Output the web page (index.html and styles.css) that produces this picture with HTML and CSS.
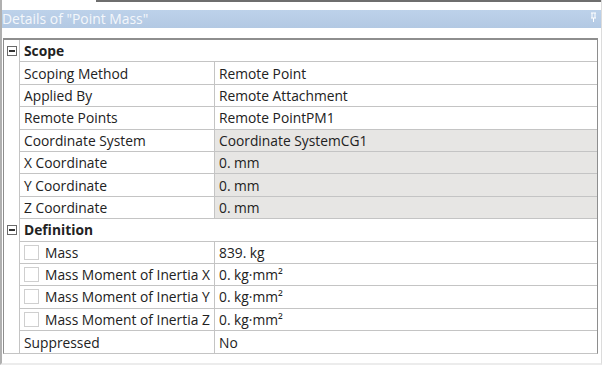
FILE: index.html
```html
<!DOCTYPE html>
<html lang="en">
  <head>
    <meta charset="UTF-8" />
    <title>Details of "Point Mass"</title>
    <link rel="stylesheet" href="styles.css">
  </head>
  <body>
    <main class="panel">
      <div class="top-edge"></div>
      <header class="titlebar">
        <span class="title">Details of "Point Mass"</span>
        <svg class="pin" width="7" height="11" viewBox="0 0 7 11">
          <path d="M1 1h5M2 1v5M5 1v5M1 6h5M3.5 6v4" stroke="#fff" stroke-width="1" fill="none" />
        </svg>
      </header>
      <section class="details">
        <div class="row group">
          <div class="tree"><span class="toggle"></span></div>
          <div class="cell group-name">Scope</div>
        </div>
        <div class="row">
          <div class="tree"></div>
          <div class="cell name">Scoping Method</div>
          <div class="cell value">Remote Point</div>
        </div>
        <div class="row">
          <div class="tree"></div>
          <div class="cell name">Applied By</div>
          <div class="cell value">Remote Attachment</div>
        </div>
        <div class="row">
          <div class="tree"></div>
          <div class="cell name">Remote Points</div>
          <div class="cell value">Remote PointPM1</div>
        </div>
        <div class="row">
          <div class="tree"></div>
          <div class="cell name">Coordinate System</div>
          <div class="cell value readonly">Coordinate SystemCG1</div>
        </div>
        <div class="row">
          <div class="tree"></div>
          <div class="cell name">X Coordinate</div>
          <div class="cell value readonly">0. mm</div>
        </div>
        <div class="row">
          <div class="tree"></div>
          <div class="cell name">Y Coordinate</div>
          <div class="cell value readonly">0. mm</div>
        </div>
        <div class="row">
          <div class="tree"></div>
          <div class="cell name">Z Coordinate</div>
          <div class="cell value readonly">0. mm</div>
        </div>
        <div class="row group">
          <div class="tree"><span class="toggle"></span></div>
          <div class="cell group-name">Definition</div>
        </div>
        <div class="row">
          <div class="tree"></div>
          <div class="cell name"><span class="check"></span>Mass</div>
          <div class="cell value">839. kg</div>
        </div>
        <div class="row">
          <div class="tree"></div>
          <div class="cell name"><span class="check"></span>Mass Moment of Inertia X</div>
          <div class="cell value">0. kg·mm²</div>
        </div>
        <div class="row">
          <div class="tree"></div>
          <div class="cell name"><span class="check"></span>Mass Moment of Inertia Y</div>
          <div class="cell value">0. kg·mm²</div>
        </div>
        <div class="row">
          <div class="tree"></div>
          <div class="cell name"><span class="check"></span>Mass Moment of Inertia Z</div>
          <div class="cell value">0. kg·mm²</div>
        </div>
        <div class="row">
          <div class="tree"></div>
          <div class="cell name">Suppressed</div>
          <div class="cell value">No</div>
        </div>
      </section>
    </main>
  </body>
</html>
```

FILE: styles.css
```css
* {
  box-sizing: border-box;
  margin: 0;
  padding: 0;
}
:root {
  --grid-line: #c4c4c4;
  --frame: #8e8e8e;
  --title-blue: #b8cee7;
  --readonly: #e7e6e4;
  --text: #222;
}
body {
  background: #fff;
  font-family: "Open Sans", "Noto Sans", sans-serif;
  font-size: 13.8px;
  color: var(--text);
  width: 602px;
  height: 365px;
  overflow: hidden;
}
.panel {
  height: 100%;
  border-left: 2px solid #b0b0b0;
  border-right: 1px solid #dcdcdc;
  border-bottom: 2px solid #ececec;
  display: flex;
  flex-direction: column;
}
.top-edge {
  height: 2px;
  margin-left: 94px;
  background: #6e6e6e;
}
.titlebar {
  margin-top: 8px;
  height: 18px;
  background: linear-gradient(#bdd2ea, #b3c9e3);
  display: flex;
  align-items: center;
  justify-content: space-between;
  padding: 0 4px 0 0;
}
.titlebar .title {
  color: #f4f7fb;
  font-size: 13.9px;
  line-height: 18px;
}
.titlebar .pin {
  margin-top: -4px;
}
/* property grid */
.details {
  margin: 10px 3px 0 1px;
  border-top: 2px solid var(--frame);
  border-left: 1px solid var(--frame);
  border-right: 1px solid var(--frame);
  border-bottom: 1px solid var(--grid-line);
  display: flex;
  flex-direction: column;
}
.details .row {
  display: grid;
  grid-template-columns: 16px 194px 1fr;
  height: 22.4px;
}
.details .tree {
  display: flex;
  align-items: center;
  justify-content: center;
  border-right: 1px solid var(--grid-line);
}
.details .toggle {
  position: relative;
  width: 10px;
  height: 10px;
  border: 1px solid #6a6a6a;
  background: #fff;
}
.details .toggle::after {
  content: "";
  position: absolute;
  left: 1px;
  top: 3px;
  width: 6px;
  height: 2px;
  background: #333;
}
.details .cell {
  display: flex;
  align-items: center;
  padding-left: 4px;
  white-space: nowrap;
  border-bottom: 1px solid var(--grid-line);
}
.details .row:last-child .cell {
  border-bottom: none;
}
.details .group-name {
  grid-column: 2 / 4;
  font-weight: bold;
}
.details .value {
  border-left: 1px solid var(--grid-line);
}
.details .value.readonly {
  background: var(--readonly);
}
.details .check {
  width: 15px;
  height: 15px;
  border: 1px solid #cfcfcf;
  margin-right: 6px;
}
```
